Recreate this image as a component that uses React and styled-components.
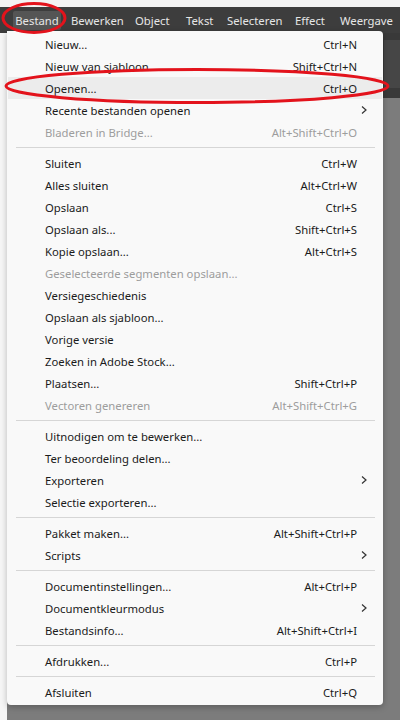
import React from "react";
import styled, { createGlobalStyle } from "styled-components";

const Global = createGlobalStyle`
  html, body { margin: 0; padding: 0; background: #f3f3f3; }
  body { font-family: "Noto Sans", "Open Sans", sans-serif; }
  #root { width: 400px; height: 720px; overflow: hidden; }
`;

const Page = styled.div`
  position: relative;
  width: 400px;
  height: 720px;
  display: grid;
  grid-template-rows: 7px 26px 1fr;
  background: #f3f3f3;
`;

const TopStrip = styled.div`
  background: #f3f3f3;
`;

const MenuBar = styled.div`
  background: #3d3d3d;
  display: flex;
  align-items: center;
  padding-left: 13px;
  overflow: hidden;
`;

const BarItem = styled.div`
  flex: 0 0 ${(p) => p.$w}px;
  margin-right: ${(p) => p.$mr || 0}px;
  color: #e6e6e6;
  font-size: 11.3px;
  height: 19px;
  display: flex;
  align-items: center;
  justify-content: ${(p) => (p.$active ? "center" : "flex-start")};
  padding-left: ${(p) => (p.$active ? 0 : 2)}px;
  box-sizing: border-box;
  border-radius: 2px;
  background: ${(p) => (p.$active ? "#555555" : "transparent")};
  white-space: nowrap;
`;

const Workspace = styled.div`
  display: grid;
  grid-template-columns: 7px 1fr;
`;

const LeftGutter = styled.div`
  background: #f6f6f6;
`;

const Stage = styled.div`
  display: grid;
  grid-template-rows: 65px 1fr;
`;

const ControlBar = styled.div`
  background: #393939;
  display: flex;
  justify-content: flex-end;
  align-items: center;
`;

const ControlBox = styled.div`
  width: 16px;
  height: 48px;
  background: #464646;
  margin-top: -4px;
`;

const Canvas = styled.div`
  background: #7c7c7c;
`;

const Dropdown = styled.div`
  position: absolute;
  left: 7px;
  top: 31px;
  width: 376px;
  background: #f9f9f9;
  border-radius: 0 4px 4px 4px;
  box-shadow: 0 2px 6px rgba(0, 0, 0, 0.25);
  padding: 2px 0 2px;
  box-sizing: border-box;
`;

const Row = styled.div`
  height: 22px;
  display: grid;
  grid-template-columns: 1fr auto 25px;
  align-items: center;
  padding-left: 37px;
  margin: 0 1px;
  font-size: 11.3px;
  color: ${(p) => (p.$disabled ? "#9d9d9d" : "#1b1b1b")};
  background: ${(p) => (p.$hover ? "#ececec" : "transparent")};
  white-space: nowrap;
`;

const Label = styled.span``;

const Shortcut = styled.span`
  text-align: right;
`;

const Arrow = styled.span`
  display: flex;
  justify-content: flex-start;
  padding-left: 3px;
  color: #333;
`;

const Separator = styled.div`
  height: 1px;
  background: #d6d6d6;
  margin: 4px 8px 4px 9px;
`;

const Annot = styled.svg`
  position: absolute;
  left: 0;
  top: 0;
  pointer-events: none;
`;

const Chevron = () => (
  <svg width="8" height="10" viewBox="0 0 8 10">
    <path d="M2 1.5 L6 5 L2 8.5" fill="none" stroke="#333" strokeWidth="1.2" />
  </svg>
);

const items = [
  ["Nieuw...", "Ctrl+N"],
  ["Nieuw van sjabloon...", "Shift+Ctrl+N"],
  ["Openen...", "Ctrl+O", { hover: true }],
  ["Recente bestanden openen", "", { sub: true }],
  ["Bladeren in Bridge...", "Alt+Shift+Ctrl+O", { disabled: true }],
  "sep",
  ["Sluiten", "Ctrl+W"],
  ["Alles sluiten", "Alt+Ctrl+W"],
  ["Opslaan", "Ctrl+S"],
  ["Opslaan als...", "Shift+Ctrl+S"],
  ["Kopie opslaan...", "Alt+Ctrl+S"],
  ["Geselecteerde segmenten opslaan...", "", { disabled: true }],
  ["Versiegeschiedenis", ""],
  ["Opslaan als sjabloon...", ""],
  ["Vorige versie", ""],
  ["Zoeken in Adobe Stock...", ""],
  ["Plaatsen...", "Shift+Ctrl+P"],
  ["Vectoren genereren", "Alt+Shift+Ctrl+G", { disabled: true }],
  "sep",
  ["Uitnodigen om te bewerken...", ""],
  ["Ter beoordeling delen...", ""],
  ["Exporteren", "", { sub: true }],
  ["Selectie exporteren...", ""],
  "sep",
  ["Pakket maken...", "Alt+Shift+Ctrl+P"],
  ["Scripts", "", { sub: true }],
  "sep",
  ["Documentinstellingen...", "Alt+Ctrl+P"],
  ["Documentkleurmodus", "", { sub: true }],
  ["Bestandsinfo...", "Alt+Shift+Ctrl+I"],
  "sep",
  ["Afdrukken...", "Ctrl+P"],
  "sep",
  ["Afsluiten", "Ctrl+Q"],
];

const barItems = [
  ["Bestand", 48, true, 8],
  ["Bewerken", 64],
  ["Object", 51],
  ["Tekst", 41],
  ["Selecteren", 68],
  ["Effect", 45],
  ["Weergave", 62],
];

export default function App() {
  return (
    <>
      <Global />
      <Page>
        <TopStrip />
        <MenuBar>
          {barItems.map(([t, w, a, mr]) => (
            <BarItem key={t} $w={w} $active={a} $mr={mr}>
              {t}
            </BarItem>
          ))}
        </MenuBar>
        <Workspace>
          <LeftGutter />
          <Stage>
            <ControlBar>
              <ControlBox />
            </ControlBar>
            <Canvas />
          </Stage>
        </Workspace>
        <Dropdown>
          {items.map((it, i) =>
            it === "sep" ? (
              <Separator key={i} />
            ) : (
              <Row key={i} $disabled={it[2]?.disabled} $hover={it[2]?.hover}>
                <Label>{it[0]}</Label>
                <Shortcut>{it[1]}</Shortcut>
                <Arrow>{it[2]?.sub ? <Chevron /> : null}</Arrow>
              </Row>
            )
          )}
        </Dropdown>
        <Annot width="400" height="720" viewBox="0 0 400 720">
          <ellipse cx="34" cy="18" rx="31" ry="14.5" fill="none" stroke="#e3131c" strokeWidth="3" />
          <ellipse cx="197" cy="86" rx="191" ry="16.5" fill="none" stroke="#e3131c" strokeWidth="3" />
        </Annot>
      </Page>
    </>
  );
}
